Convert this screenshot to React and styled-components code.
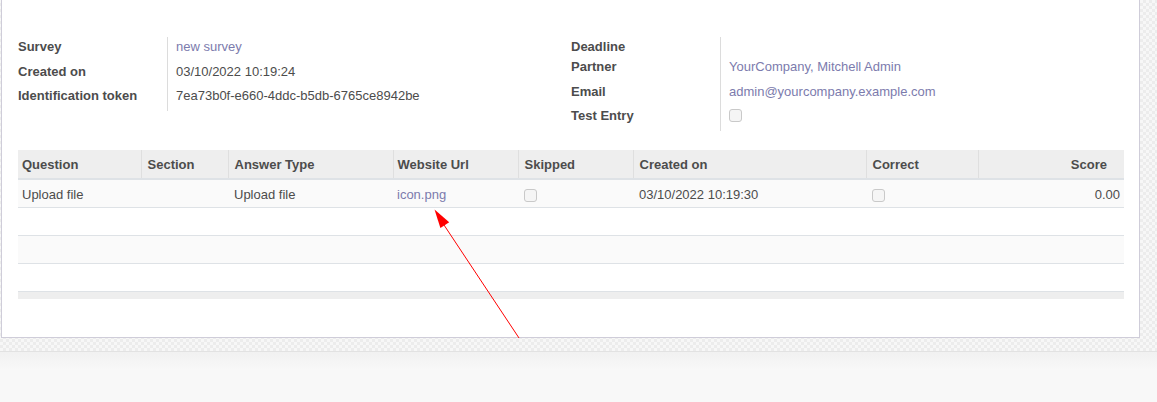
import styled, { createGlobalStyle } from "styled-components";

const GlobalStyle = createGlobalStyle`
    html, body {
        margin: 0;
        padding: 0;
    }
    body {
        font-family: "Liberation Sans", Arial, sans-serif;
        font-size: 13px;
        color: #4c4c4c;
    }
`;

const leftFields = [
    { label: "Survey", value: "new survey", link: true },
    { label: "Created on", value: "03/10/2022 10:19:24" },
    { label: "Identification token", value: "7ea73b0f-e660-4ddc-b5db-6765ce8942be" },
];

const rightFields = [
    { label: "Deadline", value: null, short: true },
    { label: "Partner", value: "YourCompany, Mitchell Admin", link: true },
    { label: "Email", value: "admin@yourcompany.example.com", link: true },
    { label: "Test Entry", checkbox: true },
];

const columns = [
    { title: "Question", width: 123 },
    { title: "Section", width: 87 },
    { title: "Answer Type", width: 165 },
    { title: "Website Url", width: 125 },
    { title: "Skipped", width: 115 },
    { title: "Created on", width: 233 },
    { title: "Correct", width: 112 },
    { title: "Score", width: 146, numeric: true },
];

export default function App() {
    return (
        <Page>
            <GlobalStyle />
            <SheetArea>
                <Sheet>
                    <Groups>
                        <FieldGroup fields={leftFields} />
                        <FieldGroup fields={rightFields} />
                    </Groups>

                    <Table>
                        <colgroup>
                            {columns.map(c => <col key={c.title} style={{ width: c.width }} />)}
                        </colgroup>
                        <thead>
                            <tr>
                                {columns.map(c => <Th key={c.title} $numeric={c.numeric}>{c.title}</Th>)}
                            </tr>
                        </thead>
                        <tbody>
                            <Row $striped>
                                <Td>Upload file</Td>
                                <Td></Td>
                                <Td>Upload file</Td>
                                <Td><Link href="#">icon.png</Link></Td>
                                <Td><Checkbox /></Td>
                                <Td>03/10/2022 10:19:30</Td>
                                <Td><Checkbox /></Td>
                                <Td $numeric>0.00</Td>
                            </Row>
                            {/* filler rows odoo keeps under a short list */}
                            {[false, true, false].map((striped, i) => (
                                <Row key={i} $striped={striped}>
                                    <Td colSpan={8}></Td>
                                </Row>
                            ))}
                        </tbody>
                        <tfoot>
                            <tr><FootCell colSpan={8} /></tr>
                        </tfoot>
                    </Table>
                </Sheet>
            </SheetArea>
            <Chatter />

            {/* red annotation arrow pointing to the attachment */}
            <Arrow width="1157" height="402" viewBox="0 0 1157 402">
                <line x1="519" y1="338" x2="444" y2="225" stroke="#ff0000" strokeWidth="1" />
                <polygon points="434.5,209.5 449.2,222.2 440.4,228" fill="#ff0000" />
            </Arrow>
        </Page>
    );
}

const FieldGroup = ({ fields }) => (
    <Group>
        {fields.map(f => (
            <Field key={f.label} $short={f.short}>
                <Label>{f.label}</Label>
                <Value>
                    {f.checkbox ? <Checkbox /> : f.link ? <Link href="#">{f.value}</Link> : f.value}
                </Value>
            </Field>
        ))}
    </Group>
);

/** STYLING */

const Page = styled.div`
    position: relative;
    height: 402px;
    overflow: hidden;
    display: flex;
    flex-direction: column;
    background: repeating-conic-gradient(#ececec 0 25%, #f7f7f7 0 50%) 0 0 / 6px 6px;
`;

const SheetArea = styled.div`
    padding: 0 17px 13px 1px;
`;

const Sheet = styled.div`
    background: #fff;
    border: 1px solid #cfcdd9;
    border-top: none;
    padding: 37px 15px 38px 16px;
`;

const Groups = styled.div`
    display: grid;
    grid-template-columns: 1fr 1fr;
    align-items: start;
`;

const Group = styled.div`
    display: flex;
    flex-direction: column;
`;

const Field = styled.div`
    display: grid;
    grid-template-columns: 149px 1fr;
    line-height: 20px;

    & > * {
        padding-bottom: ${p => (p.$short ? "0" : "4.5px")};
    }
`;

const Label = styled.div`
    font-weight: bold;
    white-space: nowrap;
`;

const Value = styled.div`
    border-left: 1px solid #dcdcdc;
    padding-left: 8px;
    display: flex;
    align-items: flex-start;
    align-self: stretch;
    min-height: 20px;
    box-sizing: border-box;
`;

const Link = styled.a`
    color: #7c7bad;
    text-decoration: none;
`;

const Checkbox = styled.span`
    display: inline-block;
    width: 13px;
    height: 13px;
    box-sizing: border-box;
    border: 1px solid #c9c9c9;
    border-radius: 3px;
    background: #f5f5f5;
    margin-top: 3px;
`;

const Table = styled.table`
    width: 100%;
    margin-top: 19px;
    border-collapse: collapse;
    table-layout: fixed;
    line-height: 15px;
`;

const Th = styled.th`
    height: 27px;
    padding: 1px ${p => (p.$numeric ? "17px" : "4px")} 0 6px;
    background: #eeeeee;
    border-right: 1px solid #dfdfdf;
    border-bottom: 2px solid #dee2e6;
    text-align: ${p => (p.$numeric ? "right" : "left")};
    font-weight: bold;
    white-space: nowrap;

    &:first-child {
        padding-left: 4px;
    }

    &:nth-child(4) {
        padding-left: 4px;
    }

    &:last-child {
        border-right: none;
    }
`;

const Row = styled.tr`
    background: ${p => (p.$striped ? "#fafafa" : "#fff")};
`;

const Td = styled.td`
    height: 25px;
    padding: 2px 4px 0 6px;
    border-bottom: 1px solid #dee2e6;
    text-align: ${p => (p.$numeric ? "right" : "left")};
    vertical-align: middle;
    white-space: nowrap;

    &:first-child, &:nth-child(4) {
        padding-left: 4px;
    }

    ${Checkbox} {
        margin-top: 0;
        vertical-align: middle;
    }
`;

const FootCell = styled.td`
    height: 7px;
    padding: 0;
    background: #eeeeee;
`;

const Chatter = styled.div`
    flex: 1;
    border-top: 1px solid #e2e2e2;
    background: linear-gradient(#f1f1f1, #f8f8f8 18px);
`;

const Arrow = styled.svg`
    position: absolute;
    left: 0;
    top: 0;
    pointer-events: none;
`;
